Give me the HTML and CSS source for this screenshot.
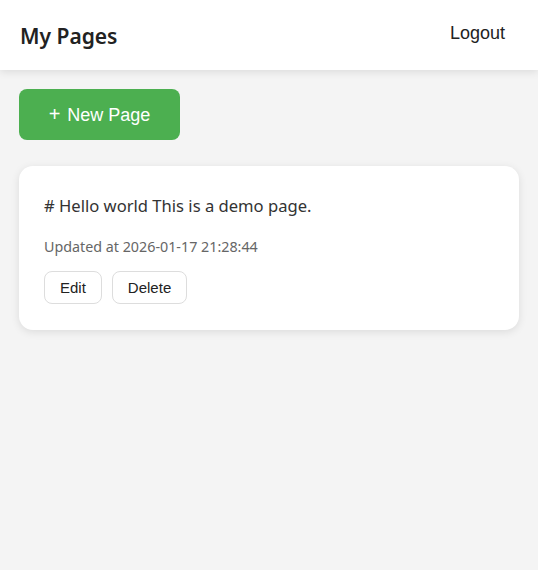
FILE: index.html
```html
<!DOCTYPE html>
<html>
<head>
<meta charset="utf-8">
<link rel="stylesheet" href="styles.css">
</head>
<body>
<header class="topbar">
  <h1 class="title">My Pages</h1>
  <button class="logout">Logout</button>
</header>
<main class="content">
  <button class="new-btn"><span class="plus">+</span> New Page</button>
  <div class="card">
    <p class="excerpt"># Hello world This is a demo page.</p>
    <p class="meta">Updated at 2026-01-17 21:28:44</p>
    <div class="actions">
      <button class="small-btn">Edit</button>
      <button class="small-btn">Delete</button>
    </div>
  </div>
</main>
</body>
</html>
```
FILE: styles.css
```css
* { box-sizing: border-box; }
html, body { margin: 0; padding: 0; }
body {
  background: #f4f4f4;
  font-family: "Noto Sans", "Open Sans", sans-serif;
  color: #333;
  height: 570px;
}
.topbar {
  height: 70px;
  background: #fff;
  display: flex;
  align-items: center;
  justify-content: space-between;
  padding: 0 20px;
  box-shadow: 0 2px 8px rgba(0,0,0,0.1);
}
.title {
  margin: 0;
  font-size: 21px;
  font-weight: 600;
  color: #222;
  position: relative;
  top: 1px;
}
.logout {
  background: none;
  border: none;
  font-family: "Liberation Sans", Arial, sans-serif;
  font-size: 18px;
  color: #222;
  padding: 0 13px;
  position: relative;
  top: -2px;
}
.content {
  padding: 19px 19px;
  display: flex;
  flex-direction: column;
  align-items: flex-start;
  gap: 26px;
}
.new-btn {
  width: 161px;
  height: 51px;
  background: #4caf50;
  color: #fff;
  border: none;
  border-radius: 8px;
  font-family: "Liberation Sans", Arial, sans-serif;
  font-size: 18px;
  padding: 0;
}
.plus { font-size: 20px; margin-right: 2px; }
.card {
  width: 500px;
  background: #fff;
  border-radius: 14px;
  box-shadow: 0 2px 8px rgba(0,0,0,0.1);
  padding: 24px 25px 26px;
}
.excerpt {
  margin: 0;
  font-size: 16.6px;
  line-height: 32px;
  color: #333;
}
.meta {
  margin: 15px 0 0;
  font-size: 14.3px;
  line-height: 20px;
  color: #666;
}
.actions {
  margin-top: 14px;
  display: flex;
  gap: 10px;
}
.small-btn {
  height: 33px;
  background: #fff;
  border: 1px solid #ddd;
  border-radius: 8px;
  font-family: "Liberation Sans", Arial, sans-serif;
  font-size: 15px;
  color: #222;
  padding: 0 15px;
}
```
